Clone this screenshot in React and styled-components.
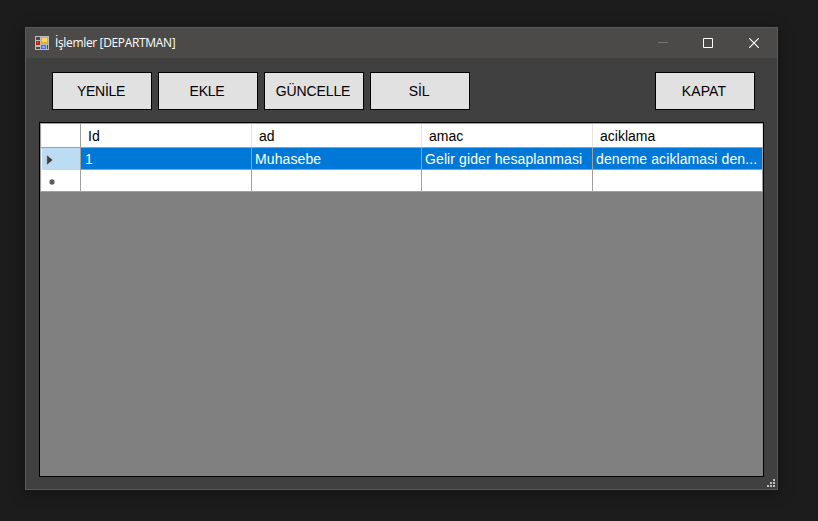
import React from "react";
import styled, { createGlobalStyle } from "styled-components";

const GlobalStyle = createGlobalStyle`
  * { box-sizing: border-box; }
  body { margin: 0; background: #1c1c1c; overflow: hidden; }
`;

const Desktop = styled.main`
  width: 818px;
  height: 521px;
  padding: 27px 0 0 25px;
  background: #1c1c1c;
  font-family: "Liberation Sans", Arial, sans-serif;
`;

const Window = styled.section`
  width: 753px;
  height: 463px;
  border: 1px solid #5a5a59;
  background: #404040;
  box-shadow: 0 3px 14px rgba(0, 0, 0, 0.35);
  display: flex;
  flex-direction: column;
`;

const TitleBar = styled.header`
  height: 30px;
  flex: none;
  padding-left: 9px;
  display: flex;
  align-items: center;
  background: #4c4a48;
`;

const Title = styled.h1`
  margin: 0 auto 0 6px;
  font: 400 12px/16px "Open Sans", "Noto Sans", sans-serif;
  letter-spacing: ${(p) => p.$spacing}px;
  color: #fff;
  white-space: pre;
`;

const CaptionButton = styled.button`
  width: ${(p) => p.$width || 46}px;
  height: 30px;
  padding: 0 ${(p) => p.$inset || 0}px 0 0;
  border: 0;
  background: none;
  display: flex;
  align-items: center;
  justify-content: center;
`;

const Toolbar = styled.nav`
  height: 38px;
  flex: none;
  margin: 14px 22px 0 26px;
  display: flex;
  gap: 6px;
`;

const ActionButton = styled.button`
  width: 100px;
  height: 38px;
  padding: 0 2px 0 0;
  border: 1px solid #000;
  border-radius: 0;
  background: #e1e1e1;
  color: #000;
  font: 14px/17px "Liberation Sans", Arial, sans-serif;
  letter-spacing: ${(p) => p.$spacing || 0}px;
  margin-left: ${(p) => (p.$end ? "auto" : 0)};
`;

const GridView = styled.div`
  width: 725px;
  height: 355px;
  flex: none;
  margin: 12px 0 0 13px;
  border: 1px solid #000;
  background: #808080;
`;

const Row = styled.div`
  display: grid;
  grid-template-columns: 41px 171px 170px 171px 170px;
  grid-template-rows: 100%;
  height: ${(p) => p.$height}px;
`;

const HeaderRow = styled(Row)`
  border-top: 1px solid #a0a0a0;
`;

const RowHeader = styled.div`
  border: solid #a0a0a0;
  border-width: 0 1px ${(p) => (p.$selected ? 0 : 1)}px 0;
  box-shadow: inset 1px 0 #a0a0a0, inset 2px 0 #f4f4f4;
  background: ${(p) => (p.$selected ? "#bcdcf4" : "#fff")};
  padding-left: ${(p) => p.$indent || 0}px;
  padding-top: ${(p) => p.$drop || 0}px;
  display: flex;
  align-items: center;
`;

const ColumnHeader = styled.div`
  border-bottom: 1px solid #a0a0a0;
  background: linear-gradient(#e5e5e5, #e5e5e5) right top / 1px 100% no-repeat #fff;
  padding: 2px 0 0 7px;
  font-size: 14px;
  line-height: 20px;
  color: #000;
`;

const Cell = styled.div`
  border: solid #a0a0a0;
  border-width: 0 1px 1px 0;
  background: ${(p) => (p.$selected ? "#0078d7" : "#fff")};
  color: #fff;
  padding: 2px 0 0 ${(p) => p.$indent || 3}px;
  font-size: 14px;
  line-height: 19px;
  letter-spacing: 0.1px;
  white-space: nowrap;
  overflow: hidden;
`;

const GripArea = styled.footer`
  flex: 1;
  display: flex;
  justify-content: flex-end;
  align-items: flex-end;
  padding: 0 2px 2px 0;
`;

function FormIcon() {
  return (
    <svg width="14" height="14" shapeRendering="crispEdges">
      <path fill="#bdbdbd" d="M0 0h14v14H0z" />
      <path fill="#4c4a48" d="M1 1h4v3H1zM1 11h4v2H1zM12 9h1v4h-1z" />
      <path fill="#c4210f" d="M1 5h4v4H1z" />
      <path fill="#f0705c" d="M2 6h1v1H2z" />
      <path fill="#e9ad16" d="M6 1h7v7H6z" />
      <path fill="#ffd75c" d="M7 2h5v4H7z" />
      <path fill="#3d78d8" d="M6 9h5v4H6z" />
      <path fill="#78a8f4" d="M7 10h3v2H7z" />
    </svg>
  );
}

const buttons = [
  { label: "YENİLE", spacing: -0.3 },
  { label: "EKLE", spacing: -0.25 },
  { label: "GÜNCELLE", spacing: -0.1 },
  { label: "SİL", spacing: -0.1 },
];

const columns = [
  { name: "Id", value: "1", indent: 4 },
  { name: "ad", value: "Muhasebe" },
  { name: "amac", value: "Gelir gider hesaplanmasi" },
  { name: "aciklama", value: "deneme aciklamasi den..." },
];

export default function App() {
  return (
    <Desktop>
      <GlobalStyle />
      <Window>
        <TitleBar>
          <FormIcon />
          <Title $spacing={-0.35}>İşlemler [DEPARTMAN]</Title>
          <CaptionButton aria-label="Minimize">
            <svg width="10" height="10" shapeRendering="crispEdges"><path fill="#777573" d="M0 4h10v1H0z" /></svg>
          </CaptionButton>
          <CaptionButton aria-label="Maximize" $width={45} $inset={1}>
            <svg width="10" height="10"><path fill="none" stroke="#fff" d="M.5.5h9v9h-9z" /></svg>
          </CaptionButton>
          <CaptionButton aria-label="Close">
            <svg width="10" height="10"><path fill="none" stroke="#fff" strokeWidth="1.2" d="M.2.2l9.6 9.6M9.8.2L.2 9.8" /></svg>
          </CaptionButton>
        </TitleBar>
        <Toolbar>
          {buttons.map((b) => <ActionButton key={b.label} $spacing={b.spacing}>{b.label}</ActionButton>)}
          <ActionButton $end $spacing={0.1}>KAPAT</ActionButton>
        </Toolbar>
        <GridView>
          <HeaderRow $height={25}>
            <RowHeader />
            {columns.map((c) => <ColumnHeader key={c.name}>{c.name}</ColumnHeader>)}
          </HeaderRow>
          <Row $height={22}>
            <RowHeader $selected $indent={6} $drop={1}>
              <svg width="8" height="12"><path fill="#404040" stroke="#eaf4fb" strokeWidth=".5" d="M.7.7v10.6L7 6z" /></svg>
            </RowHeader>
            {columns.map((c) => <Cell key={c.name} $selected $indent={c.indent}>{c.value}</Cell>)}
          </Row>
          <Row $height={22}>
            <RowHeader $indent={9} $drop={2}>
              <svg width="6" height="6"><path stroke="#505050" strokeWidth="1.2" d="M3 0v6M0 3h6M.8.8l4.4 4.4M5.2.8L.8 5.2" /></svg>
            </RowHeader>
            {columns.map((c) => <Cell key={c.name} />)}
          </Row>
        </GridView>
        <GripArea>
          <svg width="8" height="8" shapeRendering="crispEdges">
            <path fill="#bfbfbf" d="M6 0h2v2H6zM3 3h2v2H3zM6 3h2v2H6zM0 6h2v2H0zM3 6h2v2H3zM6 6h2v2H6z" />
          </svg>
        </GripArea>
      </Window>
    </Desktop>
  );
}
